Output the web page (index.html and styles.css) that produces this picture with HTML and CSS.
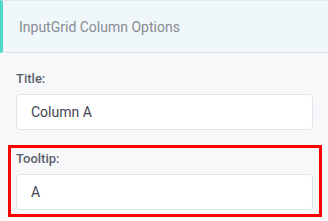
FILE: index.html
```html
<!DOCTYPE html>
<html>
<head>
<meta charset="utf-8">
<link rel="stylesheet" href="styles.css">
</head>
<body>
<div class="panel">
  <div class="panel-header">InputGrid Column Options</div>
  <div class="panel-body">
    <div class="form-group">
      <label class="form-label">Title:</label>
      <div class="form-input">Column A</div>
    </div>
    <div class="form-group highlighted">
      <label class="form-label">Tooltip:</label>
      <div class="form-input">A</div>
    </div>
  </div>
</div>
</body>
</html>
```
FILE: styles.css
```css
html, body {
  margin: 0;
  padding: 0;
  background: #f7f8fa;
  font-family: Roboto, "Noto Sans", sans-serif;
}
.panel {
  width: 328px;
  height: 221px;
  overflow: hidden;
  background: #f7f8fa;
}
.panel-header {
  box-sizing: border-box;
  height: 53px;
  border-top: 1px solid #e6ebee;
  border-bottom: 1px solid #dde3e7;
  border-left: 3px solid #4fd8c6;
  background: #f0f7fb;
  color: #878c92;
  font-size: 14px;
  display: flex;
  align-items: center;
  padding-left: 16px;
}
.panel-body {
  display: flex;
  flex-direction: column;
  gap: 14px;
  padding: 15px 9px 0 11px;
}
.form-group {
  display: flex;
  flex-direction: column;
  padding: 1px 6px 4px 5px;
}
.form-group.highlighted {
  outline: 3px solid #ff0000;
}
.form-label {
  font-size: 13px;
  font-weight: 500;
  line-height: 20px;
  color: #5b616b;
  margin-bottom: 5px;
}
.form-input {
  box-sizing: border-box;
  height: 36px;
  background: #ffffff;
  border: 1px solid #dfe2e6;
  border-radius: 4px;
  padding-left: 14px;
  font-size: 14px;
  color: #3f4652;
  display: flex;
  align-items: center;
}
```
